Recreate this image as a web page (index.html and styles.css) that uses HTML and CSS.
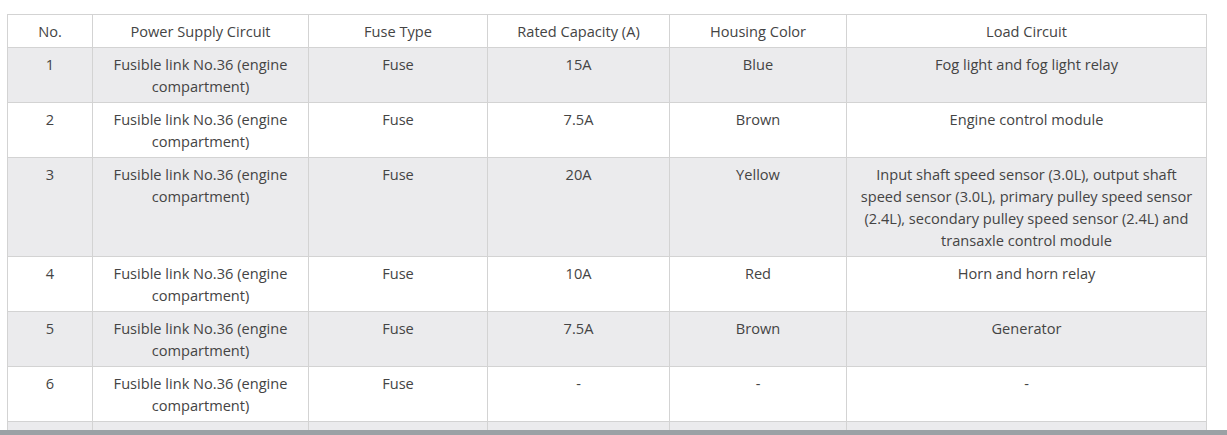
FILE: index.html
```html
<!DOCTYPE html>
<html>
<head>
<meta charset="utf-8">
<link rel="stylesheet" href="styles.css">
</head>
<body>
<div class="page">
<table class="fuse-table">
<colgroup>
<col class="c-no"><col class="c-psc"><col class="c-type"><col class="c-cap"><col class="c-color"><col class="c-load">
</colgroup>
<thead>
<tr><th>No.</th><th>Power Supply Circuit</th><th>Fuse Type</th><th>Rated Capacity (A)</th><th>Housing Color</th><th>Load Circuit</th></tr>
</thead>
<tbody>
<tr><td>1</td><td>Fusible link No.36 (engine compartment)</td><td>Fuse</td><td>15A</td><td>Blue</td><td>Fog light and fog light relay</td></tr>
<tr><td>2</td><td>Fusible link No.36 (engine compartment)</td><td>Fuse</td><td>7.5A</td><td>Brown</td><td>Engine control module</td></tr>
<tr><td>3</td><td>Fusible link No.36 (engine compartment)</td><td>Fuse</td><td>20A</td><td>Yellow</td><td>Input shaft speed sensor (3.0L), output shaft speed sensor (3.0L), primary pulley speed sensor (2.4L), secondary pulley speed sensor (2.4L) and transaxle control module</td></tr>
<tr><td>4</td><td>Fusible link No.36 (engine compartment)</td><td>Fuse</td><td>10A</td><td>Red</td><td>Horn and horn relay</td></tr>
<tr><td>5</td><td>Fusible link No.36 (engine compartment)</td><td>Fuse</td><td>7.5A</td><td>Brown</td><td>Generator</td></tr>
<tr><td>6</td><td>Fusible link No.36 (engine compartment)</td><td>Fuse</td><td>-</td><td>-</td><td>-</td></tr>
<tr class="row-partial"><td></td><td></td><td></td><td></td><td></td><td></td></tr>
</tbody>
</table>
</div>
<div class="bottom-bar"></div>
</body>
</html>
```
FILE: styles.css
```css
html, body {
  margin: 0;
  padding: 0;
  background: #ffffff;
  overflow: hidden;
}
body {
  font-family: "Open Sans", "Noto Sans", sans-serif;
  color: #444444;
}
.page {
  padding: 14px 0 0 7px;
  width: 1199px;
}
.fuse-table {
  border-collapse: collapse;
  table-layout: fixed;
  width: 1199px;
  font-size: 14.6px;
  line-height: 22px;
}
.c-no { width: 85px; }
.c-psc { width: 216px; }
.c-type { width: 179px; }
.c-cap { width: 182px; }
.c-color { width: 177px; }
.c-load { width: 360px; }
.fuse-table th,
.fuse-table td {
  border: 1px solid #d3d3d3;
  padding: 5px 10px 5px;
  text-align: center;
  vertical-align: top;
  font-weight: normal;
}
.fuse-table tbody tr:nth-child(odd) {
  background: #ebebed;
}
.fuse-table tbody tr:nth-child(even) {
  background: #ffffff;
}
.fuse-table .row-partial td {
  height: 22px;
}
.bottom-bar {
  position: fixed;
  left: 0;
  right: 0;
  bottom: 0;
  height: 5px;
  background: #9ba1a5;
}
```
